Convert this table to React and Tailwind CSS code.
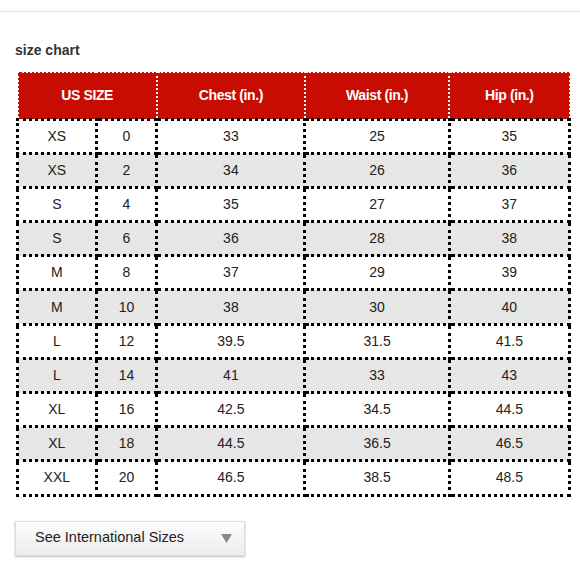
import React from 'react';

const rows = [
  ['XS', '0', '33', '25', '35'],
  ['XS', '2', '34', '26', '36'],
  ['S', '4', '35', '27', '37'],
  ['S', '6', '36', '28', '38'],
  ['M', '8', '37', '29', '39'],
  ['M', '10', '38', '30', '40'],
  ['L', '12', '39.5', '31.5', '41.5'],
  ['L', '14', '41', '33', '43'],
  ['XL', '16', '42.5', '34.5', '44.5'],
  ['XL', '18', '44.5', '36.5', '46.5'],
  ['XXL', '20', '46.5', '38.5', '48.5'],
];

const App = () => {
  return (
    <div className="w-[580px] h-[580px] bg-white overflow-hidden" style={{ fontFamily: '"Liberation Sans", Arial, sans-serif' }}>
      <div className="h-[12px] border-b border-[#e3e3e3]" />

      <div className="pl-[15px] pt-[30px]">
        <h2 className="text-[14px] font-bold text-[#333] leading-[16px]">size chart</h2>

        <table className="mt-[13px] border-collapse text-[14px] text-[#222] w-[555px] ml-[1px]">
          <colgroup>
            <col className="w-[79px]" />
            <col className="w-[61px]" />
            <col className="w-[149px]" />
            <col className="w-[145px]" />
            <col className="w-[121px]" />
          </colgroup>
          <thead>
            <tr className="h-[47px] bg-[#c80c02] text-white text-[14px] font-bold">
              <th colSpan={2} className="border-2 border-dotted border-white tracking-[-0.4px]">US SIZE</th>
              <th className="border-2 border-dotted border-white tracking-[-0.4px]">Chest (in.)</th>
              <th className="border-2 border-dotted border-white tracking-[-0.4px]">Waist (in.)</th>
              <th className="border-2 border-dotted border-white tracking-[-0.4px]">Hip (in.)</th>
            </tr>
          </thead>
          <tbody>
            {rows.map((r, i) => (
              <tr key={i} className={`h-[34.2px] ${i % 2 === 1 ? 'bg-[#e6e6e6]' : 'bg-white'}`}>
                {r.map((c, j) => (
                  <td key={j} className="border-[3px] border-dotted border-black text-center p-0">
                    {c}
                  </td>
                ))}
              </tr>
            ))}
          </tbody>
        </table>

        <button className="mt-[24px] w-[230px] h-[35px] flex items-center justify-between pl-[19px] pr-[12px] bg-gradient-to-b from-[#fdfdfd] to-[#ececec] border border-[#dcdcdc] shadow-[0_1px_2px_rgba(0,0,0,0.25)] text-[14.5px] text-[#222]">
          <span>See International Sizes</span>
          <svg width="11" height="9" viewBox="0 0 11 9">
            <path d="M0 0 H11 L5.5 9 Z" fill="#8a8a8a" />
          </svg>
        </button>
      </div>
    </div>
  );
};

export default App;
